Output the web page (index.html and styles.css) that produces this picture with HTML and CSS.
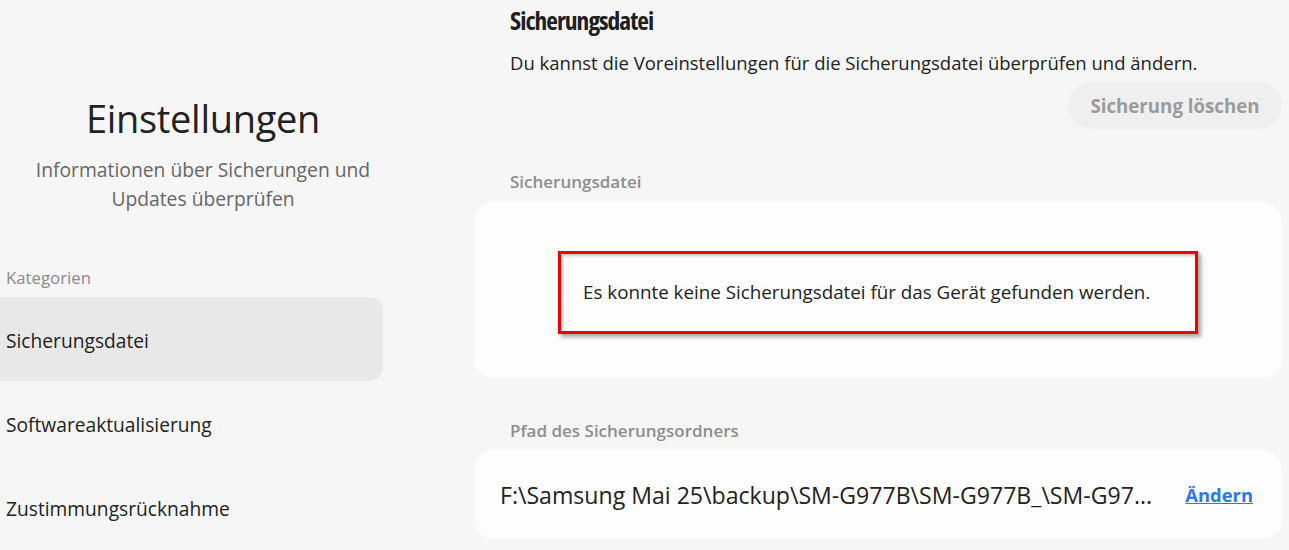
FILE: index.html
```html
<!DOCTYPE html>
<html lang="de">
<head>
<meta charset="utf-8">
<title>Einstellungen</title>
<link rel="stylesheet" href="styles.css">
</head>
<body>
<div class="app">
  <aside class="sidebar">
    <div class="intro">
      <h1 class="intro-title">Einstellungen</h1>
      <p class="intro-sub">Informationen über Sicherungen und<br>Updates überprüfen</p>
    </div>
    <div class="cat-label">Kategorien</div>
    <nav class="nav">
      <div class="nav-item active">Sicherungsdatei</div>
      <div class="nav-item">Softwareaktualisierung</div>
      <div class="nav-item">Zustimmungsrücknahme</div>
    </nav>
  </aside>
  <main class="main">
    <header class="head">
      <h2 class="head-title">Sicherungsdatei</h2>
      <p class="head-sub">Du kannst die Voreinstellungen für die Sicherungsdatei überprüfen und ändern.</p>
    </header>
    <div class="actions">
      <button class="btn-delete" type="button">Sicherung löschen</button>
    </div>
    <div class="section-label first">Sicherungsdatei</div>
    <section class="card card-empty">
      <div class="notice">Es konnte keine Sicherungsdatei für das Gerät gefunden werden.</div>
    </section>
    <div class="section-label second">Pfad des Sicherungsordners</div>
    <section class="card card-path">
      <span class="path">F:\Samsung Mai 25\backup\SM-G977B\SM-G977B_\SM-G97...</span>
      <a class="change" href="#">Ändern</a>
    </section>
  </main>
</div>
</body>
</html>
```
FILE: styles.css
```css
html, body {
  margin: 0;
  padding: 0;
  background: #f6f6f6;
  height: 100%;
  overflow: hidden;
}
body {
  font-family: "Open Sans", "Noto Sans", sans-serif;
  color: #222;
}
.app {
  display: flex;
  width: 1289px;
  height: 550px;
}
.sidebar {
  width: 383px;
  flex: none;
  display: flex;
  flex-direction: column;
}
.intro {
  width: 406px;
  text-align: center;
  padding-top: 92px;
}
.intro-title {
  margin: 0;
  font-weight: 400;
  font-size: 38px;
  line-height: 52px;
  color: #222;
  letter-spacing: -0.3px;
}
.intro-sub {
  margin: 11px 0 0;
  font-size: 19.3px;
  line-height: 29px;
  color: #666;
}
.cat-label {
  margin-top: 55px;
  padding-left: 6px;
  font-size: 16.8px;
  line-height: 20px;
  color: #8a8a8a;
}
.nav {
  margin-top: 9px;
  display: flex;
  flex-direction: column;
}
.nav-item {
  height: 84px;
  display: flex;
  align-items: center;
  padding-left: 6px;
  padding-top: 2px;
  box-sizing: border-box;
  font-size: 19.2px;
  color: #222;
  border-radius: 0 14px 14px 0;
}
.nav-item.active {
  background: #e8e8e8;
}
.main {
  margin-left: 91px;
  width: 808px;
  flex: none;
  display: flex;
  flex-direction: column;
}
.head {
  padding-left: 36px;
  padding-top: 2px;
}
.head-title {
  margin: 0;
  font-size: 25.5px;
  font-weight: 700;
  font-stretch: 75%;
  line-height: 36px;
  color: #1e1e1e;
  letter-spacing: -1px;
}
.head-sub {
  margin: 11px 0 0;
  font-size: 18.5px;
  line-height: 28px;
  color: #222;
}
.actions {
  display: flex;
  justify-content: flex-end;
  margin-top: 5px;
}
.btn-delete {
  width: 214px;
  height: 47px;
  border: none;
  border-radius: 24px;
  background: #efefef;
  color: #9b9b9b;
  font-family: inherit;
  font-size: 18.7px;
  font-weight: 700;
  padding: 0;
}
.section-label {
  padding-left: 36px;
  font-size: 17px;
  font-weight: 600;
  line-height: 22px;
  color: #8d8d8d;
}
.section-label.first {
  margin-top: 42px;
}
.section-label.second {
  margin-top: 42px;
}
.card {
  background: #fdfdfd;
  border-radius: 20px;
}
.card-empty {
  margin-top: 9px;
  height: 176px;
  display: flex;
  justify-content: center;
  align-items: center;
  padding-top: 4px;
  box-sizing: border-box;
}
.notice {
  width: 640px;
  height: 83px;
  box-sizing: border-box;
  border: 3px solid #f20000;
  box-shadow: 3px 3px 4px rgba(0, 0, 0, 0.35), inset 2px 2px 3px rgba(0, 0, 0, 0.22);
  display: flex;
  align-items: center;
  padding-left: 22px;
  font-size: 18.8px;
  color: #222;
  white-space: nowrap;
}
.card-path {
  margin-top: 8px;
  height: 89px;
  display: flex;
  align-items: center;
  padding-left: 26px;
  padding-right: 29px;
}
.path {
  flex: 1;
  font-size: 23.1px;
  color: #222;
  white-space: nowrap;
}
.change {
  font-size: 18.4px;
  font-weight: 700;
  color: #2a7ae2;
  text-decoration: underline;
}
```
